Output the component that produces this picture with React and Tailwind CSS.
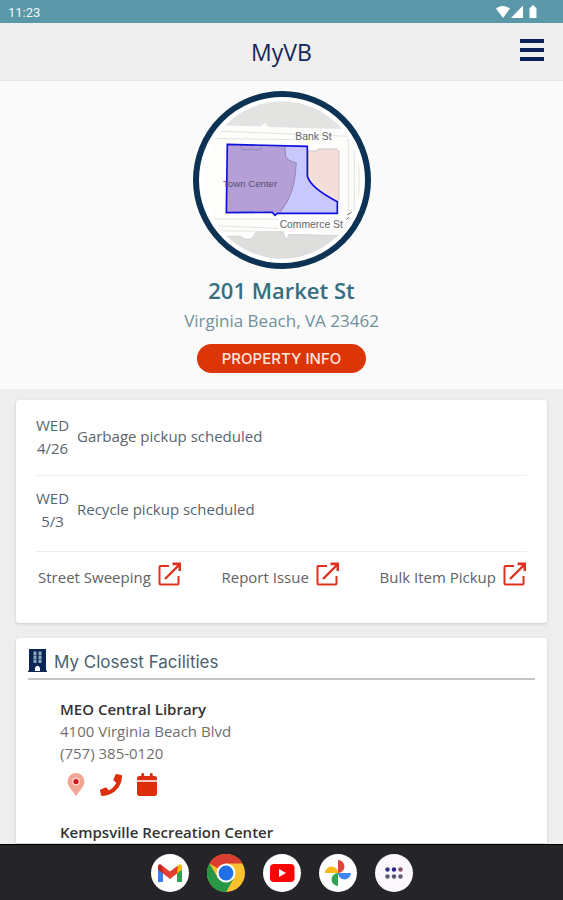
import React from "react";
import { FaPhone } from "react-icons/fa";
import { FaCalendar } from "react-icons/fa6";

const pickups = [
  { day: "WED", date: "4/26", text: "Garbage pickup scheduled" },
  { day: "WED", date: "5/3", text: "Recycle pickup scheduled" },
];

const services = ["Street Sweeping", "Report Issue", "Bulk Item Pickup"];

function StatusBar() {
  return (
    <div className="flex h-[23px] shrink-0 items-center justify-between bg-[#5a97a8] pr-6 pl-2 text-[#eef6f8]">
      <span className="pt-0.5 font-['Roboto',sans-serif] text-[13px]">11:23</span>
      <svg className="mt-px h-3.5 w-[43px] text-white" viewBox="0 0 43 14" fill="currentColor" aria-hidden="true">
        <path d="M0 3.500C3.800 0 9.200 0 14 3.500L7 13Z" />
        <path d="M27 .500v12.500H15Z" />
        <path d="M35.500 .500h3V2q2 0 2 2v9h-7V4q0-2 2-2Z" />
      </svg>
    </div>
  );
}

function Header() {
  return (
    <header className="grid h-[58px] shrink-0 grid-cols-[1fr_auto_1fr] items-center border-b border-[#e4e4e4] bg-[#efefef] px-[19px]">
      <h1 className="col-start-2 pt-0.5 text-[23px] text-[#14265a]">MyVB</h1>
      <button type="button" aria-label="Menu" className="mb-1 justify-self-end text-[#0c1f57]">
        <svg className="h-6 w-6" viewBox="0 0 24 24" fill="currentColor">
          <path d="M0 1h24v4H0zM0 10h24v4H0zM0 19h24v4H0z" />
        </svg>
      </button>
    </header>
  );
}

function ParcelMap() {
  return (
    <svg className="h-[178px] w-[178px]" viewBox="24 16 534 534" role="img" aria-label="Parcel map">
      <defs>
        <clipPath id="map-area">
          <circle cx="291" cy="283" r="236" />
        </clipPath>
      </defs>
      <circle cx="291" cy="283" r="258" fill="#fff" stroke="#0c3354" strokeWidth="18" />
      <g clipPath="url(#map-area)">
        <rect x="40" y="30" width="510" height="510" fill="#fdfdfc" />
        <path d="M40 30H550V132L250 124L240 112L228 122L40 118Z" fill="#e3e3e2" />
        <path d="M100 452H165L180 460H200L214 438H294L304 464L312 446L550 452V550H100Z" fill="#dededd" stroke="#c9c9c9" strokeWidth="2" />
        <path d="M40 134L490 152V382M40 158L330 162M508 150V400M522 200V360M40 400H280M40 418L280 428M486 405V440M40 436H210" fill="none" stroke="#e2e2df" strokeWidth="3" />
        <path d="M380 196H398V190H454L462 196V345L457 348Q395 325 370 275V196Z" fill="#f3dedb" stroke="#d0c8c5" strokeWidth="3" />
      </g>
      <path d="M127 176L367 182V272Q378 308 457 348V383H277L270 389L262 380L124 381Z" fill="#c8c8ff" />
      <path d="M127 176L300 181L302 212L312 224L334 232Q330 330 286 381L124 381Z" fill="#b4a0d6" />
      <path d="M165 180L172 192H226L230 181M300 183L302 212L312 224L334 232Q330 330 286 376" fill="none" stroke="#9488b8" strokeWidth="3" />
      <path d="M127 176L367 182V272Q378 308 457 348V383H277L270 389L262 380L124 381Z" fill="none" stroke="#1111dd" strokeWidth="5" />
      <path d="M486 388L500 380M484 402L492 394" stroke="#777" strokeWidth="3" />
      <g className="font-['Liberation_Sans',Arial,sans-serif]" fill="#64646c">
        <text x="331" y="163" fontSize="31">Bank St</text>
        <text x="114" y="304" fill="#54506e" fontSize="29">Town Center</text>
        <text x="284" y="428" fontSize="31">Commerce St</text>
      </g>
    </svg>
  );
}

function Property() {
  return (
    <section className="flex flex-col items-center bg-[#fafafa] pt-2.5 pb-4">
      <ParcelMap />
      <h2 className="mt-1.5 text-[22px] leading-[30px] font-semibold text-[#376f82]">201 Market St</h2>
      <p className="mt-1 text-[17px] leading-6 text-[#70909b]">Virginia Beach, VA 23462</p>
      <button
        type="button"
        className="mt-[11px] h-[29px] rounded-full bg-[#dc3508] px-[25px] pt-0.5 font-['Inter',sans-serif] text-[15px] font-medium text-[#ffe6de]"
      >
        PROPERTY INFO
      </button>
    </section>
  );
}

function ExternalIcon() {
  return (
    <svg className="h-6 w-6 shrink-0" viewBox="0 0 24 24" fill="none" stroke="#e0301e" strokeWidth="2" aria-hidden="true">
      <path d="M11 4H2.500q-1 0-1 1V21.500q0 1 1 1h17q1 0 1-1V14" />
      <path d="M7 17L20.500 3.500" strokeWidth="2.400" />
      <path d="M14.500 .500h8.500v8.500h-2.500V5.500L18.500 3.200H14.500Z" fill="#e0301e" stroke="none" />
    </svg>
  );
}

function Pickups() {
  return (
    <section className="rounded-[3px] bg-white px-5 pb-9 shadow-[0_1px_3px_rgba(0,0,0,0.16)]">
      <ul>
        {pickups.map((p) => (
          <li
            key={p.date}
            className="flex h-[76px] items-center gap-2 border-b border-[#eeeeee] pb-0.5 text-[#59656e] last:pb-2"
          >
            <div className="w-[33px] text-center leading-[23px]">
              <div>{p.day}</div>
              <div>{p.date}</div>
            </div>
            <p>{p.text}</p>
          </li>
        ))}
      </ul>
      <nav className="flex justify-between pt-2.5 pl-0.5">
        {services.map((s) => (
          <a key={s} href="#" className="flex items-start gap-[7px] text-[#626262]">
            <span className="pt-[5px] leading-5">{s}</span>
            <ExternalIcon />
          </a>
        ))}
      </nav>
    </section>
  );
}

function BuildingIcon() {
  return (
    <svg className="h-[23px] w-[19px]" viewBox="0 0 19 23" aria-hidden="true">
      <path d="M1 0h17v21.500H19V23H0v-1.500h1Z" fill="#0b2655" />
      <path d="M5.500 2.500h3v3.500h-3zM10.500 2.500h3v3.500h-3zM5.500 6.500h3v3.500h-3zM10.500 6.500h3v3.500h-3zM5.500 10.500h3v3.500h-3zM10.500 10.500h3v3.500h-3z" fill="#8ba9bd" />
      <path d="M7 22v-3.500q2.500-3.500 5 0V22Z" fill="#fff" />
    </svg>
  );
}

function PinIcon() {
  return (
    <svg className="h-[23px] w-[18px]" viewBox="0 0 18 23" aria-hidden="true">
      <path d="M9 23C6 18.500.5 13 .5 8.500a8.500 8.500 0 0 1 17 0C17.500 13 12 18.500 9 23Z" fill="#f2a693" />
      <circle cx="9" cy="8.500" r="4" fill="#f9d5cc" />
      <circle cx="9" cy="8.500" r="2.600" fill="#d0181a" />
    </svg>
  );
}

function Facilities() {
  return (
    <section className="rounded-t-[3px] bg-white px-3 pt-2.5 shadow-[0_1px_3px_rgba(0,0,0,0.16)]">
      <div className="flex items-center gap-[7px] border-b-2 border-[#c3c6c8] pb-[6px]">
        <BuildingIcon />
        <h2 className="pt-1 font-['Inter',sans-serif] text-[17px] leading-5 text-[#4b5f70]">My Closest Facilities</h2>
      </div>
      <div className="pt-[18px] pl-8 leading-[22px] text-[#707070]">
        <h3 className="font-semibold text-[#333333]">MEO Central Library</h3>
        <p>4100 Virginia Beach Blvd</p>
        <p>(757) 385-0120</p>
        <div className="mt-[9px] flex items-center gap-[15px] pl-[7px] text-[#dc2f0c]">
          <a href="#" aria-label="Directions"><PinIcon /></a>
          <a href="#" aria-label="Call"><FaPhone className="h-[22px] w-[22px]" /></a>
          <a href="#" aria-label="Events"><FaCalendar className="h-[23px] w-5" /></a>
        </div>
        <h3 className="mt-[25px] font-semibold text-[#333333]">Kempsville Recreation Center</h3>
      </div>
    </section>
  );
}

function Gmail() {
  return (
    <svg viewBox="0 0 38 38">
      <circle cx="19" cy="19" r="19" fill="#fff" />
      <path d="M7 12v16h5V16Z" fill="#3b80ee" />
      <path d="M31 12v16h-5V16Z" fill="#32a350" />
      <path d="M26 13l2-2.500q3-1 3 2v3l-5 4Z" fill="#fbbc05" />
      <path d="M12 13l-2-2.500q-3-1-3 2v3l5 4Z" fill="#c5221f" />
      <path d="M11 11.500l8 6 8-6-1 8L19 25l-7-5.500Z" fill="#e43e32" />
    </svg>
  );
}

function Chrome() {
  return (
    <svg viewBox="0 0 38 38">
      <circle cx="19" cy="19" r="19" fill="#fbc02e" />
      <path d="M19 19L2.500 9.500A19 19 0 0 1 35.500 9.500H19Z" fill="#dc3d31" />
      <path d="M2.500 9.500A19 19 0 0 0 19 38L27.200 23.700 19 19 10.800 23.700Z" fill="#279847" />
      <circle cx="19" cy="19" r="9.500" fill="#fff" />
      <circle cx="19" cy="19" r="7.400" fill="#2270e5" />
    </svg>
  );
}

function YouTube() {
  return (
    <svg viewBox="0 0 38 38">
      <circle cx="19" cy="19" r="19" fill="#fff" />
      <rect x="7" y="10" width="24.500" height="18" rx="4" fill="#fa0505" />
      <path d="M16 15l7 4-7 4Z" fill="#fff" />
    </svg>
  );
}

function Photos() {
  return (
    <svg viewBox="0 0 38 38">
      <circle cx="19" cy="19" r="19" fill="#fff" />
      <path d="M19 19V6a6.500 6.500 0 0 1 0 13Z" fill="#e34436" />
      <path d="M19 19H32a6.500 6.500 0 0 1-13 0Z" fill="#4285f4" />
      <path d="M19 19V32a6.500 6.500 0 0 1 0-13Z" fill="#32a452" />
      <path d="M19 19H6a6.500 6.500 0 0 1 13 0Z" fill="#fbb912" />
    </svg>
  );
}

function AllApps() {
  return (
    <svg viewBox="0 0 38 38">
      <circle cx="19" cy="19" r="19" fill="#fbf7fc" />
      <circle cx="12.500" cy="15.500" r="2.200" fill="#33337d" />
      <circle cx="19" cy="15.500" r="2.200" fill="#25258a" />
      <circle cx="25.500" cy="15.500" r="2.200" fill="#80506e" />
      <circle cx="12.500" cy="22.500" r="2.200" fill="#5a5a72" />
      <circle cx="19" cy="22.500" r="2.200" fill="#55556d" />
      <circle cx="25.500" cy="22.500" r="2.200" fill="#5e5a74" />
    </svg>
  );
}

const apps = [
  { name: "Gmail", Icon: Gmail },
  { name: "Chrome", Icon: Chrome },
  { name: "YouTube", Icon: YouTube },
  { name: "Photos", Icon: Photos },
  { name: "All apps", Icon: AllApps },
];

function Dock() {
  return (
    <nav className="flex h-14 shrink-0 items-center justify-center gap-[18px] border-t border-black bg-[#252529]">
      {apps.map(({ name, Icon }) => (
        <button key={name} type="button" aria-label={name} className="h-[38px] w-[38px]">
          <Icon />
        </button>
      ))}
    </nav>
  );
}

export default function App() {
  return (
    <div className="flex h-screen flex-col bg-[#eeeeee] font-['Open_Sans',sans-serif] text-[15px]">
      <StatusBar />
      <Header />
      <main className="min-h-0 flex-1 overflow-hidden">
        <Property />
        <div className="flex flex-col gap-[15px] px-4 pt-[11px]">
          <Pickups />
          <Facilities />
        </div>
      </main>
      <Dock />
    </div>
  );
}
